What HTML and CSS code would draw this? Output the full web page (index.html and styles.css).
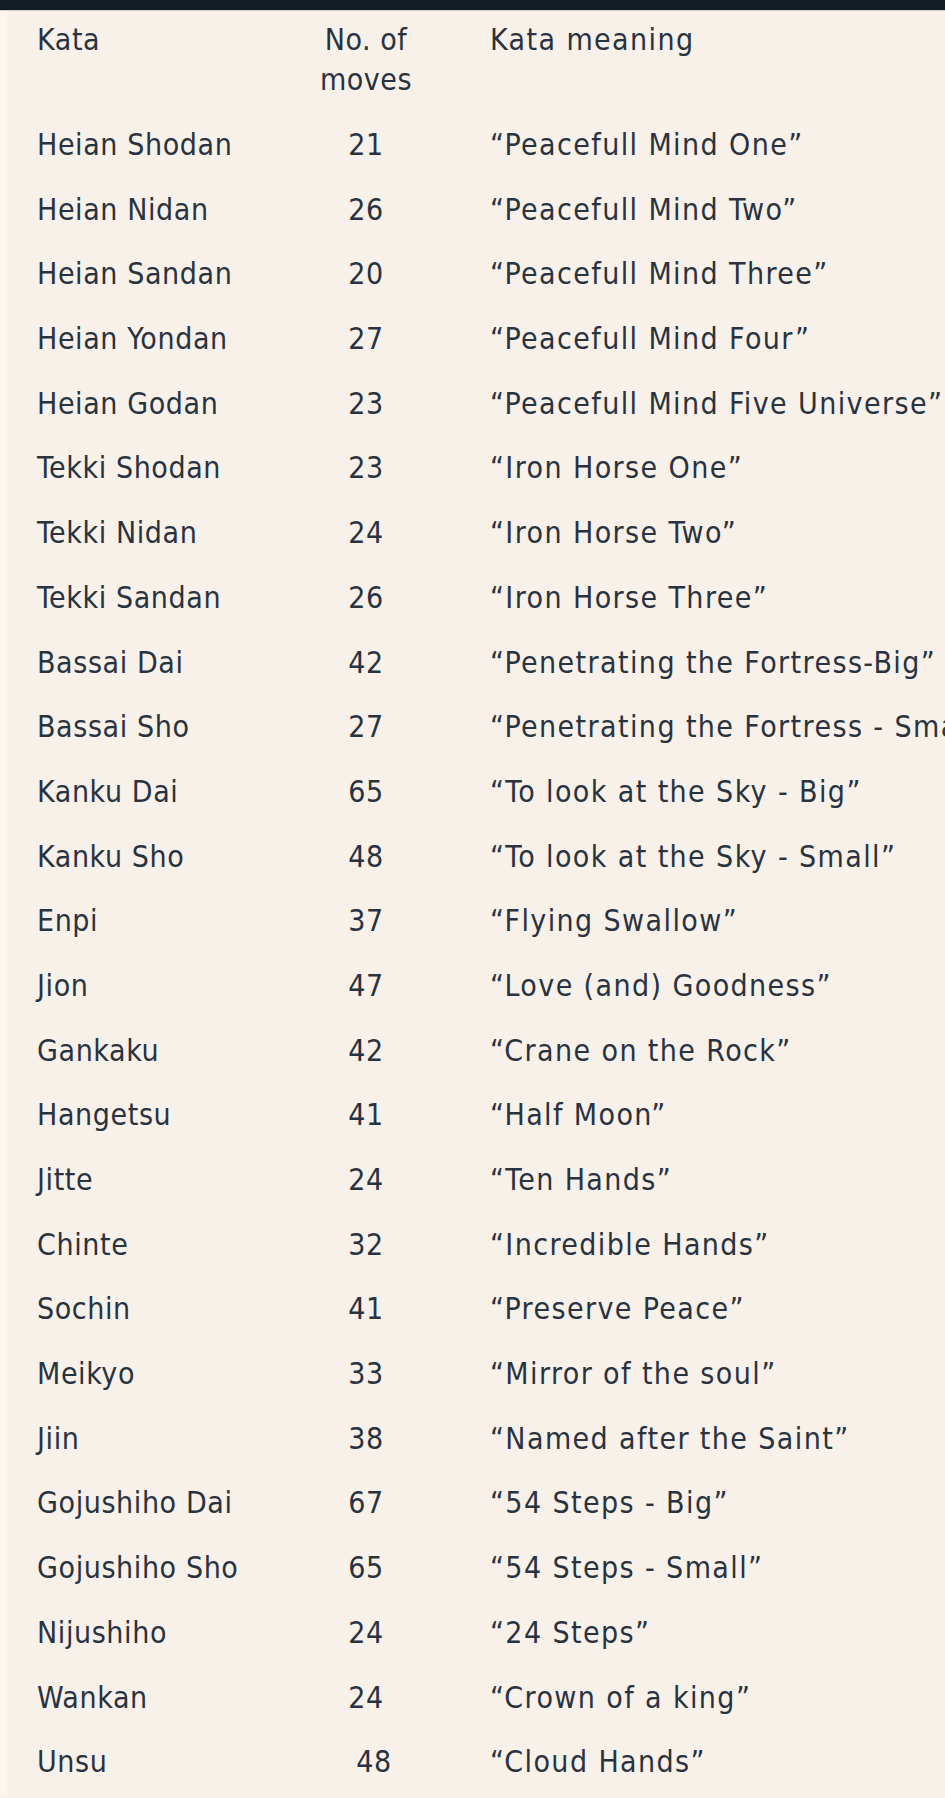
FILE: index.html
```html
<!DOCTYPE html>
<html lang="en">
<head>
<meta charset="utf-8">
<title>Shotokan Kata</title>
<link rel="stylesheet" href="styles.css">
</head>
<body>
<div class="topbar"></div>
<main class="sheet">
  <div class="head">
    <div class="c1">Kata</div>
    <div class="c2">No. of<br>moves</div>
    <div class="c3">Kata meaning</div>
  </div>
  <div class="rows">
    <div class="c1">Heian Shodan</div><div class="c2">21</div><div class="c3">“Peacefull Mind One”</div>
    <div class="c1">Heian Nidan</div><div class="c2">26</div><div class="c3">“Peacefull Mind Two”</div>
    <div class="c1">Heian Sandan</div><div class="c2">20</div><div class="c3">“Peacefull Mind Three”</div>
    <div class="c1">Heian Yondan</div><div class="c2">27</div><div class="c3">“Peacefull Mind Four”</div>
    <div class="c1">Heian Godan</div><div class="c2">23</div><div class="c3">“Peacefull Mind Five Universe”</div>
    <div class="c1">Tekki Shodan</div><div class="c2">23</div><div class="c3">“Iron Horse One”</div>
    <div class="c1">Tekki Nidan</div><div class="c2">24</div><div class="c3">“Iron Horse Two”</div>
    <div class="c1">Tekki Sandan</div><div class="c2">26</div><div class="c3">“Iron Horse Three”</div>
    <div class="c1">Bassai Dai</div><div class="c2">42</div><div class="c3">“Penetrating the Fortress-Big”</div>
    <div class="c1">Bassai Sho</div><div class="c2">27</div><div class="c3">“Penetrating the Fortress - Small”</div>
    <div class="c1">Kanku Dai</div><div class="c2">65</div><div class="c3">“To look at the Sky - Big”</div>
    <div class="c1">Kanku Sho</div><div class="c2">48</div><div class="c3">“To look at the Sky - Small”</div>
    <div class="c1">Enpi</div><div class="c2">37</div><div class="c3">“Flying Swallow”</div>
    <div class="c1">Jion</div><div class="c2">47</div><div class="c3">“Love (and) Goodness”</div>
    <div class="c1">Gankaku</div><div class="c2">42</div><div class="c3">“Crane on the Rock”</div>
    <div class="c1">Hangetsu</div><div class="c2">41</div><div class="c3">“Half Moon”</div>
    <div class="c1">Jitte</div><div class="c2">24</div><div class="c3">“Ten Hands”</div>
    <div class="c1">Chinte</div><div class="c2">32</div><div class="c3">“Incredible Hands”</div>
    <div class="c1">Sochin</div><div class="c2">41</div><div class="c3">“Preserve Peace”</div>
    <div class="c1">Meikyo</div><div class="c2">33</div><div class="c3">“Mirror of the soul”</div>
    <div class="c1">Jiin</div><div class="c2">38</div><div class="c3">“Named after the Saint”</div>
    <div class="c1">Gojushiho Dai</div><div class="c2">67</div><div class="c3">“54 Steps - Big”</div>
    <div class="c1">Gojushiho Sho</div><div class="c2">65</div><div class="c3">“54 Steps - Small”</div>
    <div class="c1">Nijushiho</div><div class="c2">24</div><div class="c3">“24 Steps”</div>
    <div class="c1">Wankan</div><div class="c2">24</div><div class="c3">“Crown of a king”</div>
    <div class="c1">Unsu</div><div class="c2 shifted">48</div><div class="c3">“Cloud Hands”</div>
  </div>
</main>
</body>
</html>
```
FILE: styles.css
```css
html, body {
  margin: 0;
  padding: 0;
}
body {
  width: 945px;
  height: 1798px;
  overflow: hidden;
  background: #f8f1e9;
  color: #28333f;
  font-family: "DejaVu Sans Condensed", "DejaVu Sans", sans-serif;
  font-stretch: condensed;
  font-size: 30px;
}
.topbar {
  height: 10px;
  background: #111c24;
  border-bottom: 1px solid #cfcfcf;
}
.sheet {
  border-left: 7px solid #fcf6ee;
  padding: 9px 0 0 30px;
  min-height: 1778px;
  box-sizing: border-box;
}
.head,
.rows {
  display: grid;
  grid-template-columns: 250px 158px 1fr;
  white-space: nowrap;
}
.head {
  line-height: 40px;
  margin-bottom: 13px;
}
.rows {
  grid-auto-rows: 64.7px;
  line-height: 64.7px;
}
.c1 {
  letter-spacing: 0.6px;
}
.c2 {
  text-align: center;
  letter-spacing: 0.5px;
}
.c3 {
  padding-left: 45px;
  letter-spacing: 1.4px;
}
.shifted {
  padding-left: 16px;
}
```
